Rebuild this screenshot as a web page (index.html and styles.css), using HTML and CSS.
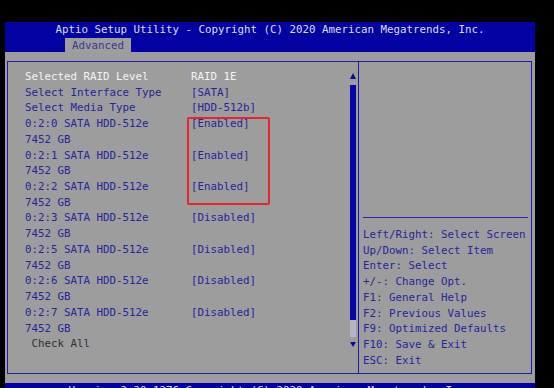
FILE: index.html
```html
<!DOCTYPE html>
<html lang="en">
<head>
    <meta charset="UTF-8" />
    <meta name="viewport" content="width=device-width, initial-scale=1.0"/>
    <title>Aptio Setup Utility - Advanced</title>
    <link rel="stylesheet" href="styles.css">
</head>
<body>
    <div class="screen">
        <div class="header">
            <div class="title">Aptio Setup Utility - Copyright (C) 2020 American Megatrends, Inc.</div>
            <div class="tabs">
                <div class="tab">Advanced</div>
            </div>
        </div>

        <div class="main">
            <div class="panels">
                <div class="left">
                    <div class="list">
                        <div class="row selected"><span>Selected RAID Level</span><span>RAID 1E</span></div>
                        <div class="row"><span>Select Interface Type</span><span>[SATA]</span></div>
                        <div class="row"><span>Select Media Type</span><span>[HDD-512b]</span></div>
                        <div class="row"><span>0:2:0 SATA HDD-512e</span><span>[Enabled]</span></div>
                        <div class="row"><span>7452 GB</span><span></span></div>
                        <div class="row"><span>0:2:1 SATA HDD-512e</span><span>[Enabled]</span></div>
                        <div class="row"><span>7452 GB</span><span></span></div>
                        <div class="row"><span>0:2:2 SATA HDD-512e</span><span>[Enabled]</span></div>
                        <div class="row"><span>7452 GB</span><span></span></div>
                        <div class="row"><span>0:2:3 SATA HDD-512e</span><span>[Disabled]</span></div>
                        <div class="row"><span>7452 GB</span><span></span></div>
                        <div class="row"><span>0:2:5 SATA HDD-512e</span><span>[Disabled]</span></div>
                        <div class="row"><span>7452 GB</span><span></span></div>
                        <div class="row"><span>0:2:6 SATA HDD-512e</span><span>[Disabled]</span></div>
                        <div class="row"><span>7452 GB</span><span></span></div>
                        <div class="row"><span>0:2:7 SATA HDD-512e</span><span>[Disabled]</span></div>
                        <div class="row"><span>7452 GB</span><span></span></div>
                        <div class="row action"><span>Check All</span><span></span></div>
                    </div>

                    <div class="scroll">
                        <div class="arrow-up"></div>
                        <div class="thumb"></div>
                        <div class="track"></div>
                        <div class="arrow-down"></div>
                    </div>

                    <!-- highlight drawn on the photo -->
                    <div class="mark"></div>
                </div>

                <div class="right">
                    <div class="help-top"></div>
                    <div class="divider"></div>
                    <div class="help">
                        <div>Left/Right: Select Screen</div>
                        <div>Up/Down: Select Item</div>
                        <div>Enter: Select</div>
                        <div>+/-: Change Opt.</div>
                        <div>F1: General Help</div>
                        <div>F2: Previous Values</div>
                        <div>F9: Optimized Defaults</div>
                        <div>F10: Save &amp; Exit</div>
                        <div>ESC: Exit</div>
                    </div>
                </div>
            </div>
        </div>

        <div class="footer">Version 2.20.1276 Copyright (C) 2020 American Megatrends, Inc.</div>
    </div>
</body>
</html>
```

FILE: styles.css
```css
/* Basic Styles */
body {
    margin: 0;
    height: 388px;
    overflow: hidden;
    background: #000;
    font-family: "DejaVu Sans Mono", "Liberation Mono", monospace;
    font-size: 10.8px;
    color: #26269a;
}

.screen {
    margin: 22px 0 0 5px;
    width: 530px;
}

/* Header */
.header {
    background: #0202a2;
    height: 30px;
}

.header .title {
    height: 16px;
    line-height: 16px;
    text-align: center;
    color: #dedee8;
}

.tabs {
    height: 14px;
    padding-left: 60px;
}

.tab {
    width: 66px;
    height: 14px;
    line-height: 15px;
    text-align: center;
    background: #9d9d9d;
    color: #3a3a8e;
}

/* Body */
.main {
    background: #9d9d9d;
    padding: 9px 3px 9px 2px;
}

.panels {
    display: flex;
    height: 311px;
    border: 1px solid #1e1ea6;
}

.left {
    position: relative;
    display: flex;
    width: 350px;
    border-right: 1px solid #1e1ea6;
}

.list {
    flex: 1;
    padding: 7px 0 0 17px;
}

.row {
    display: grid;
    grid-template-columns: 166px 1fr;
    height: 15.72px;
    line-height: 15.72px;
    white-space: pre;
}

.row.selected {
    color: #f4f4f4;
}

.row.action {
    padding-left: 6.5px;
    color: #303036;
}

/* Scroll bar */
.scroll {
    display: flex;
    flex-direction: column;
    width: 6px;
    margin-right: 2px;
    padding-top: 11px;
}

.arrow-up {
    border-left: 3px solid transparent;
    border-right: 3px solid transparent;
    border-bottom: 6px solid #0a0aa0;
}

.thumb {
    margin-top: 6px;
    height: 235px;
    background: #0606a6;
}

.track {
    height: 17px;
    background: #b4b4c2;
}

.arrow-down {
    margin-top: 5px;
    border-left: 3px solid transparent;
    border-right: 3px solid transparent;
    border-top: 5px solid #0a0aa0;
}

.mark {
    position: absolute;
    left: 179px;
    top: 55px;
    width: 83px;
    height: 88px;
    box-sizing: border-box;
    border: 2px solid #e2262c;
    border-radius: 2px;
}

/* Help panel */
.right {
    flex: 1;
    display: flex;
    flex-direction: column;
}

.help-top {
    height: 155px;
}

.divider {
    height: 1px;
    margin: 0 3px 0 4px;
    background: #2a2aa6;
}

.help {
    padding: 9px 0 0 4px;
    line-height: 15.72px;
}

.help div {
    white-space: pre;
}

/* Footer */
.footer {
    height: 5px;
    overflow: hidden;
    line-height: 15px;
    background: #0202a2;
    color: #dedee8;
    text-align: center;
}
```
